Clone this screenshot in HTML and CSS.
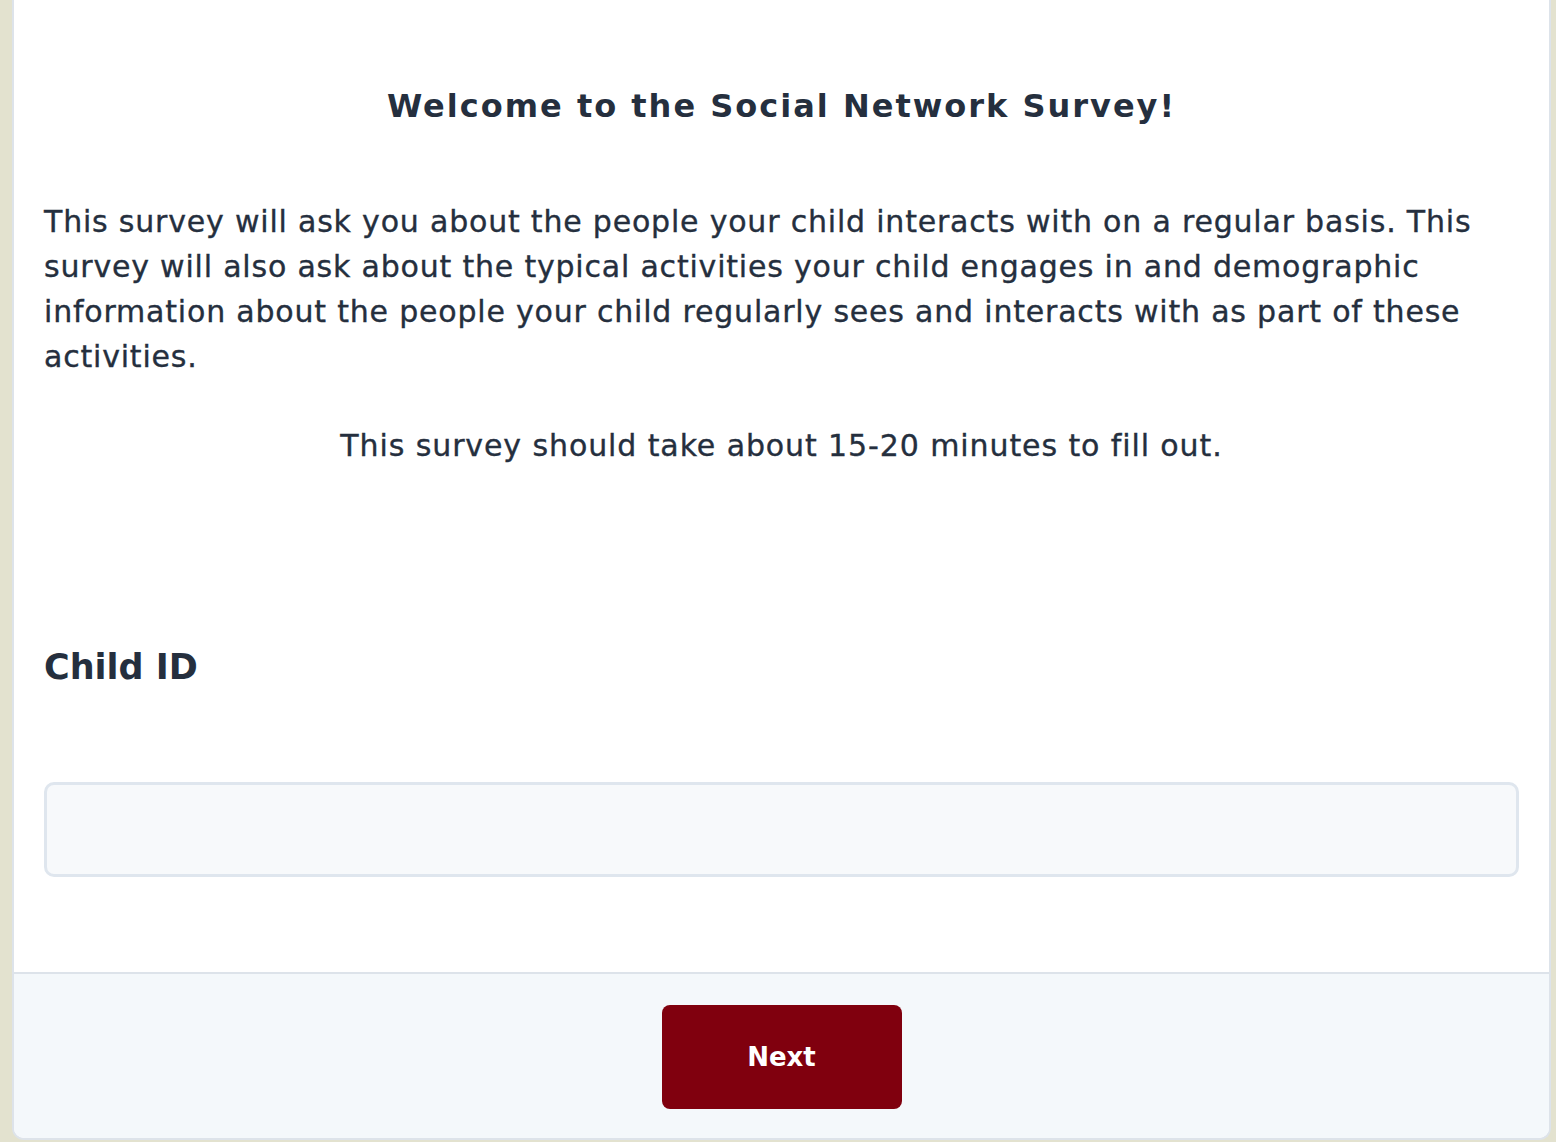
FILE: index.html
```html
<!DOCTYPE html>
<html lang="en">
<head>
<meta charset="utf-8">
<title>Social Network Survey</title>
<link rel="stylesheet" href="styles.css">
</head>
<body>
<main class="card">
  <section class="content">
    <h1 class="title">Welcome to the Social Network Survey!</h1>
    <p class="intro">This survey will ask you about the people your child interacts with on a regular basis. This survey will also ask about the typical activities your child engages in and demographic information about the people your child regularly sees and interacts with as part of these activities.</p>
    <p class="duration">This survey should take about 15-20 minutes to fill out.</p>
    <label class="field-label" for="child-id">Child ID</label>
    <input class="field-input" id="child-id" type="text">
  </section>
  <footer class="footer">
    <button class="next-btn" type="button">Next</button>
  </footer>
</main>
</body>
</html>
```
FILE: styles.css
```css
html, body {
  margin: 0;
  padding: 0;
}
body {
  background: #e3e2cf;
  padding: 0 5px 2px 12px;
  font-family: "DejaVu Sans", "Open Sans", sans-serif;
  color: #252f3e;
  height: 1142px;
  box-sizing: border-box;
  overflow: hidden;
}
.card {
  background: #ffffff;
  border: 2px solid #dde3ea;
  border-top: none;
  border-radius: 0 0 12px 12px;
  overflow: hidden;
}
.content {
  display: flex;
  flex-direction: column;
  padding: 81px 30px 95px 30px;
}
.title {
  margin: 0;
  text-align: center;
  font-size: 32px;
  line-height: 50px;
  font-weight: 700;
  letter-spacing: 2px;
}
.intro {
  margin: 68px 0 0 0;
  font-size: 30px;
  line-height: 45px;
  font-weight: 400;
  letter-spacing: 0.8px;
  -webkit-text-stroke: 0.35px currentColor;
}
.duration {
  margin: 44px 0 0 0;
  text-align: center;
  font-size: 30px;
  line-height: 45px;
  font-weight: 400;
  letter-spacing: 0.9px;
  -webkit-text-stroke: 0.35px currentColor;
}
.field-label {
  margin-top: 172px;
  font-size: 35px;
  line-height: 54px;
  font-weight: 700;
}
.field-input {
  margin-top: 88px;
  height: 95px;
  box-sizing: border-box;
  border: 3px solid #dfe6ee;
  border-radius: 10px;
  background: #f7f9fb;
  font-size: 28px;
  padding: 0 20px;
  outline: none;
}
.footer {
  background: #f4f8fb;
  border-top: 2px solid #dde3ea;
  display: flex;
  justify-content: center;
  padding: 31px 0 29px 0;
}
.next-btn {
  width: 240px;
  height: 104px;
  border: none;
  border-radius: 8px;
  background: #80000e;
  color: #ffffff;
  font-family: "DejaVu Sans", "Open Sans", sans-serif;
  font-size: 26px;
  font-weight: 700;
  cursor: pointer;
}
```
